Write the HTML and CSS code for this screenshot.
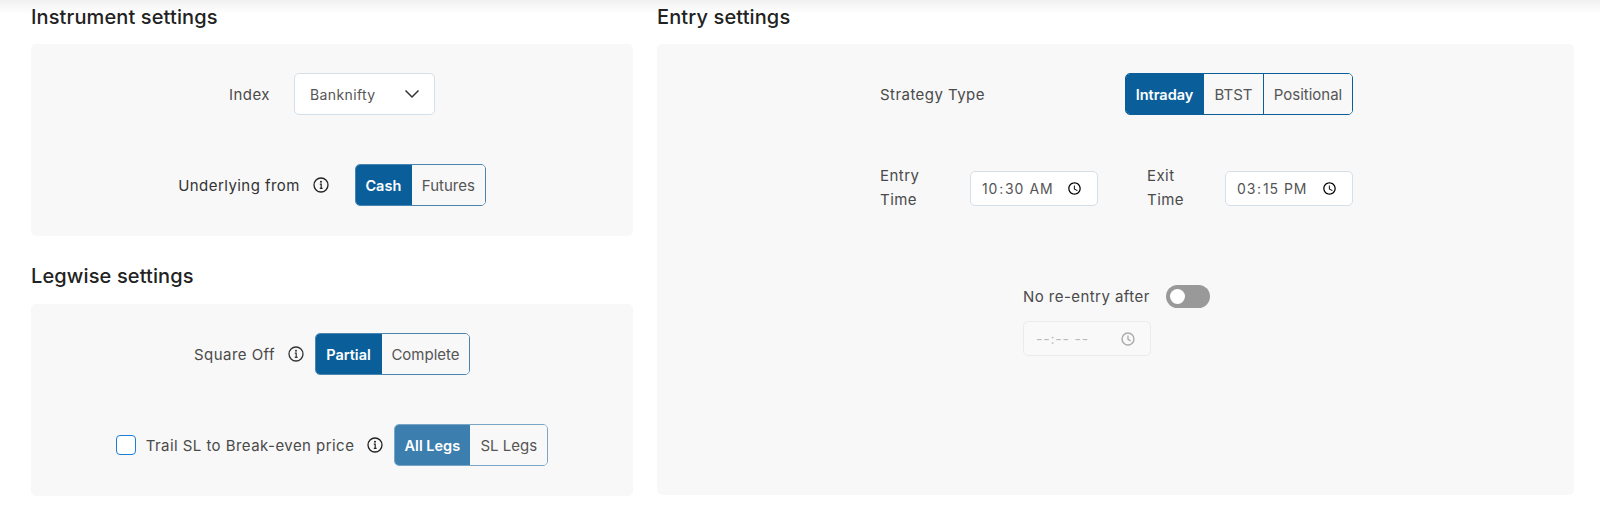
FILE: index.html
```html
<!DOCTYPE html>
<html lang="en">
<head>
  <meta charset="UTF-8" />
  <meta name="viewport" content="width=device-width, initial-scale=1.0"/>
  <title>Strategy Settings</title>
  <link rel="stylesheet" href="styles.css">
</head>
<body>
  <div class="settings">

    <div class="left-col">
      <!-- Instrument -->
      <section class="group">
        <h2>Instrument settings</h2>
        <div class="panel">
          <div class="row row-index">
            <label class="field-label">Index</label>
            <div class="select">
              <span>Banknifty</span>
              <svg width="16" height="16" viewBox="0 0 16 16"><path d="M1.5 4.5 8 11l6.5-6.5" fill="none" stroke="#333" stroke-width="1.5"/></svg>
            </div>
          </div>
          <div class="row">
            <label class="field-label dark">Underlying from</label>
            <svg class="info" viewBox="0 0 16 16"><circle cx="8" cy="8" r="7" fill="none" stroke="#222" stroke-width="1.3"/><circle cx="8" cy="4.8" r="1" fill="#222"/><path d="M6.8 7.2H8.2V11.4M6.8 11.4H9.6" fill="none" stroke="#222" stroke-width="1.2"/></svg>
            <div class="btn-group soft">
              <button class="active btn-cash">Cash</button>
              <button class="btn-futures">Futures</button>
            </div>
          </div>
        </div>
      </section>

      <!-- Legwise -->
      <section class="group">
        <h2>Legwise settings</h2>
        <div class="panel">
          <div class="row row-tight">
            <label class="field-label">Square Off</label>
            <svg class="info" viewBox="0 0 16 16"><circle cx="8" cy="8" r="7" fill="none" stroke="#333" stroke-width="1.3"/><circle cx="8" cy="4.8" r="1" fill="#333"/><path d="M6.8 7.2H8.2V11.4M6.8 11.4H9.6" fill="none" stroke="#333" stroke-width="1.2"/></svg>
            <div class="btn-group soft">
              <button class="active btn-partial">Partial</button>
              <button class="btn-complete">Complete</button>
            </div>
          </div>
          <div class="row row-tight row-trail">
            <input type="checkbox" class="check">
            <label class="field-label">Trail SL to Break-even price</label>
            <svg class="info" viewBox="0 0 16 16"><circle cx="8" cy="8" r="7" fill="none" stroke="#222" stroke-width="1.3"/><circle cx="8" cy="4.8" r="1" fill="#222"/><path d="M6.8 7.2H8.2V11.4M6.8 11.4H9.6" fill="none" stroke="#222" stroke-width="1.2"/></svg>
            <div class="btn-group muted">
              <button class="active btn-all">All Legs</button>
              <button class="btn-sl">SL Legs</button>
            </div>
          </div>
        </div>
      </section>
    </div>

    <!-- Entry -->
    <section class="group right-col">
      <h2>Entry settings</h2>
      <div class="panel entry-panel">
        <div class="entry-block">
          <div class="strategy-row">
            <label class="field-label">Strategy Type</label>
            <div class="btn-group">
              <button class="active btn-intraday">Intraday</button>
              <button class="btn-btst">BTST</button>
              <button class="btn-positional">Positional</button>
            </div>
          </div>
          <div class="time-row">
            <div class="time-field">
              <label class="field-label">Entry<br>Time</label>
              <input type="time" value="10:30">
            </div>
            <div class="time-field">
              <label class="field-label">Exit<br>Time</label>
              <input type="time" value="15:15">
            </div>
          </div>
        </div>
        <div class="reentry">
          <div class="reentry-top">
            <label class="field-label">No re-entry after</label>
            <span class="switch"><span class="knob"></span></span>
          </div>
          <div class="time-disabled">
            <span>--:-- --</span>
            <svg width="14" height="14" viewBox="0 0 16 16"><circle cx="8" cy="8" r="6.8" fill="none" stroke="#aaa" stroke-width="1.6"/><path d="M8 4v4.4l3 1.8" fill="none" stroke="#aaa" stroke-width="1.5"/></svg>
          </div>
        </div>
      </div>
    </section>

  </div>
</body>
</html>
```

FILE: styles.css
```css
* {
  box-sizing: border-box;
}

html, body {
  margin: 0;
  height: 100%;
}

body {
  font-family: Inter, "Noto Sans", sans-serif;
  background-color: #fff;
  background-image: linear-gradient(#f1f1f1, #fff 14px);
  color: #444;
  overflow: hidden;
}

h2 {
  margin: 0 0 12px;
  font-size: 20px;
  line-height: 29px;
  font-weight: 500;
  letter-spacing: 0.12px;
  color: #222;
}

.group + .group h2 {
  margin-bottom: 13px;
}

.settings {
  display: flex;
  gap: 24px;
  padding: 3px 26px 0 31px;
}

.left-col {
  width: 602px;
  display: flex;
  flex-direction: column;
  gap: 26px;
}

.right-col {
  flex: 1;
}

.panel {
  background-color: #f8f8f8;
  border-radius: 5px;
  padding: 29px 0 30px;
  display: flex;
  flex-direction: column;
  gap: 49px;
}

.entry-panel {
  height: 451px;
  align-items: center;
  gap: 0;
}

.row {
  display: flex;
  justify-content: center;
  align-items: center;
  height: 42px;
}

.field-label {
  font-size: 15px;
  letter-spacing: 0.45px;
  color: #4a4a4a;
}

.field-label.dark {
  color: #333;
}

.info {
  width: 16px;
  height: 16px;
  margin: 0 26px 0 13px;
  flex-shrink: 0;
}

.row-tight .info {
  margin-right: 11px;
}

.row-index .field-label {
  margin-right: 24px;
}

.select {
  width: 141px;
  height: 42px;
  padding: 0 14px 0 15px;
  display: flex;
  justify-content: space-between;
  align-items: center;
  background-color: #fff;
  border: 1px solid #d5dfe8;
  border-radius: 5px;
  font-size: 14px;
  letter-spacing: 0.4px;
  color: #555;
}

.btn-group {
  display: flex;
  height: 42px;
  border: 1px solid #0a5f9a;
  border-radius: 5px;
  overflow: hidden;
}

.btn-group button {
  font: inherit;
  font-size: 15px;
  color: #555;
  background: #f8f8f8;
  border: none;
  padding: 0;
  height: 100%;
}

.btn-group button + button {
  border-left: 1px solid #0a5f9a;
}

.btn-group button.active {
  background-color: #0a5f9a;
  color: #fff;
  font-size: 14.5px;
  font-weight: 600;
}

.btn-group.soft {
  border-color: #4a84b0;
}

.btn-group.soft button + button {
  border-left-color: #0a5f9a;
}

.btn-group.muted {
  border-color: #7aa6c6;
}

.btn-group.muted button.active {
  background-color: #3c7eae;
}

.btn-group.muted button + button {
  border-left-color: #3c7eae;
}

.btn-cash { width: 55px; }
.btn-futures { width: 74px; }
.btn-partial { width: 65px; }
.btn-complete { width: 88px; }
.btn-all { width: 74px; }
.btn-sl { width: 78px; }
.btn-intraday { width: 77px; }
.btn-btst { width: 60px; }
.btn-positional { width: 89px; }

.row-trail .field-label {
  margin-left: 10px;
}

.check {
  appearance: none;
  width: 20px;
  height: 20px;
  margin: 0;
  background: #fff;
  border: 1px solid #1c7ed6;
  border-radius: 4px;
}

.entry-block {
  width: 473px;
  margin-left: 2px;
}

.strategy-row {
  display: flex;
  justify-content: space-between;
  align-items: center;
  height: 42px;
}

.time-row {
  display: flex;
  justify-content: space-between;
  margin-top: 50px;
}

.time-field {
  display: flex;
  align-items: flex-start;
}

.time-field .field-label {
  width: 90px;
  line-height: 24px;
  margin-top: -1px;
}

.time-field:last-child .field-label {
  width: 78px;
}

input[type="time"] {
  width: 128px;
  height: 35px;
  margin-top: 6px;
  padding: 0 12px 0 10px;
  background: #fff;
  border: 1px solid #d5dfe8;
  border-radius: 5px;
  font-family: inherit;
  font-size: 14px;
  letter-spacing: 0.8px;
  color: #555;
}

.reentry {
  margin: 72px 0 0 2px;
  width: 187px;
}

.reentry-top {
  display: flex;
  justify-content: space-between;
  align-items: center;
  height: 24px;
}

.time-disabled {
  width: 128px;
  height: 35px;
  margin-top: 13px;
  padding: 0 15px 0 12px;
  display: flex;
  justify-content: space-between;
  align-items: center;
  background: #f9f9f9;
  border: 1px solid #e8ecef;
  border-radius: 5px;
  font-size: 14px;
  letter-spacing: 0.8px;
  color: #bbb;
}

.switch {
  width: 44px;
  height: 23px;
  padding: 4px;
  display: flex;
  background-color: #999;
  border-radius: 12px;
}

.knob {
  width: 15px;
  height: 15px;
  background-color: #fff;
  border-radius: 50%;
}
```
